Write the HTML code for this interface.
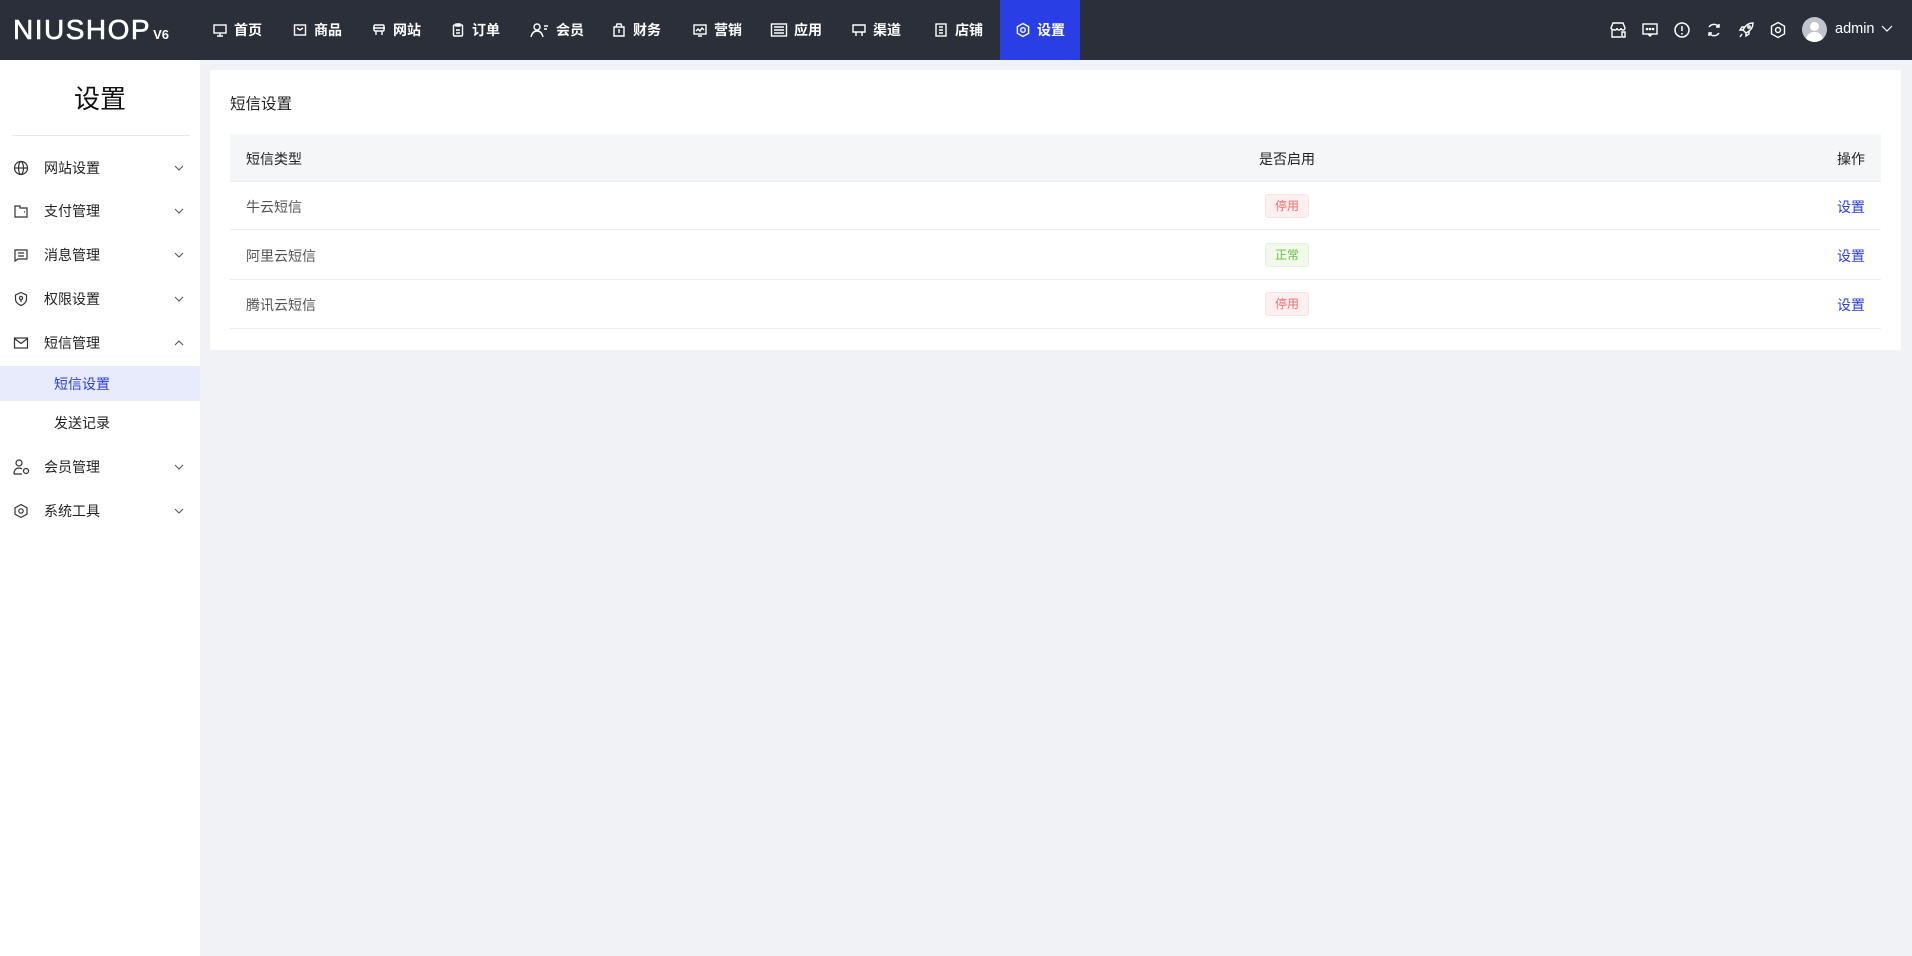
<!DOCTYPE html>
<html><head><meta charset="utf-8"><style>
*{margin:0;padding:0;box-sizing:border-box}
body{width:1912px;height:956px;background:#f0f2f5;font-family:"Liberation Sans","Noto Sans CJK SC",sans-serif;position:relative;overflow:hidden;color:#333}
.top{position:absolute;left:0;top:0;width:1912px;height:60px;background:#2b2f3a;color:#fff}
.logo{position:absolute;left:13px;top:14px;font-size:28px;font-weight:normal;letter-spacing:1.5px;color:#fff;-webkit-text-stroke:0.6px #fff}
.logo small{font-size:13px;margin-left:2px;letter-spacing:0;font-weight:bold;-webkit-text-stroke:0}
.nav{position:absolute;top:0;height:60px;display:flex;align-items:center;font-size:14px;font-weight:bold;color:#fff}
.nav svg{margin-right:6px}
.act{background:#2a3ee6}
.ric{position:absolute;top:21px}
.side{position:absolute;left:0;top:60px;width:200px;height:896px;background:#fff}
.stitle{position:absolute;left:0;width:200px;top:79px;text-align:center;font-size:26px;color:#111}
.div{position:absolute;left:12px;width:178px;top:135px;height:1px;background:#e8e8ec}
.mi{position:absolute;left:0;width:200px;height:36px;font-size:14px;color:#222;display:flex;align-items:center}
.mi svg.ic{position:absolute;left:13px}
.mi span{position:absolute;left:44px}
.mi svg.ar{position:absolute;left:174px}
.sub{position:absolute;left:0;width:200px;height:36px;font-size:14px;display:flex;align-items:center;padding-left:54px;color:#222}
.card{position:absolute;left:210px;top:70px;width:1691px;height:280px;background:#fff}
.ct{position:absolute;left:230px;top:92px;font-size:15.5px;color:#222}
.row{position:absolute;left:230px;width:1651px;border-bottom:1px solid #ebeef5;font-size:14px}
.row .a{position:absolute;left:16px}
.row .b{position:absolute;left:1035px;width:44px;text-align:center}
.row .c{position:absolute;right:16px}
.tag{display:inline-block;width:44px;height:24px;line-height:22px;font-size:12px;border-radius:3px;text-align:center}
.r{background:#fef0f0;border:1px solid #fde2e2;color:#f56c6c}
.g{background:#f0f9eb;border:1px solid #e1f3d8;color:#67c23a}
.lk{color:#2a3ee6}
</style></head><body>
<div class="top">
<div class="logo">NIUSHOP<small>V6</small></div>
<div class="nav" style="left:212px"><svg width="16" height="16" viewBox="0 0 16 16" fill="none" stroke="#fff" stroke-width="1.4"><rect x="2" y="3" width="12" height="8"/><path d="M8 11v3M5 14h6"/></svg>首页</div>
<div class="nav" style="left:292px"><svg width="16" height="16" viewBox="0 0 16 16" fill="none" stroke="#fff" stroke-width="1.4"><rect x="2.5" y="3" width="11" height="10"/><path d="M5 6l3 2 3-2"/></svg>商品</div>
<div class="nav" style="left:371px"><svg width="16" height="16" viewBox="0 0 16 16" fill="none" stroke="#fff" stroke-width="1.4"><rect x="3" y="3" width="10" height="6" rx="1"/><path d="M5 9v4M11 9v4M2 6h12"/></svg>网站</div>
<div class="nav" style="left:450px"><svg width="16" height="16" viewBox="0 0 16 16" fill="none" stroke="#fff" stroke-width="1.4"><rect x="3.5" y="3" width="9" height="11" rx="1"/><path d="M6 2h4v2H6zM6 8h4M6 11h4"/></svg>订单</div>
<div class="nav" style="left:530px"><svg width="20" height="16" viewBox="0 0 20 16" fill="none" stroke="#fff" stroke-width="1.4"><circle cx="7" cy="5" r="3"/><path d="M1 15c1-4 3-6 6-6s5 2 6 6M14 4h4M14 7h3"/></svg>会员</div>
<div class="nav" style="left:611px"><svg width="16" height="16" viewBox="0 0 16 16" fill="none" stroke="#fff" stroke-width="1.4"><path d="M3 5h10v9H3zM5 5l1-3h4l1 3M8 7v4"/></svg>财务</div>
<div class="nav" style="left:692px"><svg width="16" height="16" viewBox="0 0 16 16" fill="none" stroke="#fff" stroke-width="1.4"><rect x="2" y="3" width="12" height="9"/><path d="M4 9l2-2 2 2 2-3 2 2M6 14h4"/></svg>营销</div>
<div class="nav" style="left:770px"><svg width="18" height="16" viewBox="0 0 18 16" fill="none" stroke="#fff" stroke-width="1.4"><rect x="1.5" y="2" width="15" height="12"/><path d="M4 5h10M4 8h10M4 11h10"/></svg>应用</div>
<div class="nav" style="left:851px"><svg width="16" height="16" viewBox="0 0 16 16" fill="none" stroke="#fff" stroke-width="1.4"><path d="M2 3h12v7H2zM5 10v4M11 10v4"/></svg>渠道</div>
<div class="nav" style="left:933px"><svg width="16" height="16" viewBox="0 0 16 16" fill="none" stroke="#fff" stroke-width="1.4"><rect x="3" y="2" width="10" height="12"/><path d="M6 5h4M6 8h4M6 11h4"/></svg>店铺</div>
<div class="nav act" style="left:1000px;width:80px;justify-content:center"><svg width="16" height="16" viewBox="0 0 16 16" fill="none" stroke="#fff" stroke-width="1.4"><circle cx="8" cy="8" r="2.3"/><path d="M8 1.5l5.6 3.2v6.6L8 14.5l-5.6-3.2V4.7z"/></svg>设置</div>
<svg class="ric" style="left:1609px" width="18" height="18" viewBox="0 0 18 18" fill="none" stroke="#fff" stroke-width="1.4"><path d="M2 7l2-5h10l2 5c0 1.5-1.2 2-2 2s-2-.5-2-2c0 1.5-1.2 2-2 2s-2-.5-2-2c0 1.5-1.2 2-2 2S2 8.5 2 7zM3 9v7h9M13 11h3v5h-3z"/></svg>
<svg class="ric" style="left:1641px" width="18" height="18" viewBox="0 0 18 18" fill="none" stroke="#fff" stroke-width="1.4"><rect x="2" y="3" width="14" height="10"/><path d="M7 13l2 2 2-2"/><circle cx="6" cy="8" r=".6" fill="#fff"/><circle cx="9" cy="8" r=".6" fill="#fff"/><circle cx="12" cy="8" r=".6" fill="#fff"/></svg>
<svg class="ric" style="left:1673px" width="18" height="18" viewBox="0 0 18 18" fill="none" stroke="#fff" stroke-width="1.5"><circle cx="9" cy="9" r="7"/><path d="M9 5v5M9 12v1.5"/></svg>
<svg class="ric" style="left:1705px" width="18" height="18" viewBox="0 0 18 18" fill="none" stroke="#fff" stroke-width="1.5"><path d="M14 6a6 6 0 0 0-10 0M4 12a6 6 0 0 0 10 0M14 3v3h-3M4 15v-3h3"/></svg>
<svg class="ric" style="left:1737px" width="18" height="18" viewBox="0 0 18 18" fill="none" stroke="#fff" stroke-width="1.4"><path d="M16 2c-5 0-8 3-10 7l3 3c4-2 7-5 7-10zM6 9H3l2-3h3M9 12v3l3-2v-3M5 13l-2 3"/><circle cx="12" cy="6" r="1.2"/></svg>
<svg class="ric" style="left:1769px" width="18" height="18" viewBox="0 0 18 18" fill="none" stroke="#fff" stroke-width="1.4"><circle cx="9" cy="9" r="2.5"/><path d="M9 1.5l6.5 3.7v7.6L9 16.5l-6.5-3.7V5.2z"/></svg>
<div style="position:absolute;left:1802px;top:17px;width:25px;height:25px;border-radius:50%;background:#c0c4cc;overflow:hidden"><div style="position:absolute;left:8px;top:5px;width:9px;height:9px;border-radius:50%;background:#fff"></div><div style="position:absolute;left:4px;top:15px;width:17px;height:12px;border-radius:8px 8px 0 0;background:#fff"></div></div>
<div style="position:absolute;left:1835px;top:21px;font-size:14.5px;color:#fff">admin</div>
<svg style="position:absolute;left:1881px;top:25px" width="12" height="8" viewBox="0 0 12 8" fill="none" stroke="#fff" stroke-width="1.2"><path d="M1 1l5 5 5-5"/></svg>
</div>

<div class="side"></div>
<div class="stitle">设置</div>
<div class="div"></div>
<div class="mi" style="top:150px"><svg class="ic" width="16" height="16" viewBox="0 0 16 16" fill="none" stroke="#333" stroke-width="1.2"><circle cx="8" cy="8" r="6.5"/><ellipse cx="8" cy="8" rx="2.5" ry="6.5"/><path d="M1.5 8h13"/></svg><span>网站设置</span><svg class="ar" width="10" height="6" viewBox="0 0 10 6" fill="none" stroke="#555" stroke-width="1.1"><path d="M1 1l4 4 4-4"/></svg></div>
<div class="mi" style="top:193px"><svg class="ic" width="16" height="16" viewBox="0 0 16 16" fill="none" stroke="#333" stroke-width="1.2"><path d="M2 3h5v2h7v9H2z"/><path d="M11 9h1"/></svg><span>支付管理</span><svg class="ar" width="10" height="6" viewBox="0 0 10 6" fill="none" stroke="#555" stroke-width="1.1"><path d="M1 1l4 4 4-4"/></svg></div>
<div class="mi" style="top:237px"><svg class="ic" width="16" height="16" viewBox="0 0 16 16" fill="none" stroke="#333" stroke-width="1.2"><path d="M2 3h12v9H5l-3 2zM5 6h6M5 9h6"/></svg><span>消息管理</span><svg class="ar" width="10" height="6" viewBox="0 0 10 6" fill="none" stroke="#555" stroke-width="1.1"><path d="M1 1l4 4 4-4"/></svg></div>
<div class="mi" style="top:281px"><svg class="ic" width="16" height="16" viewBox="0 0 16 16" fill="none" stroke="#333" stroke-width="1.2"><path d="M8 1.5l5.5 2.5v4c0 3-2.5 5.5-5.5 6.5-3-1-5.5-3.5-5.5-6.5V4z"/><circle cx="8" cy="7" r="1.6"/><path d="M8 8.6v2.5"/></svg><span>权限设置</span><svg class="ar" width="10" height="6" viewBox="0 0 10 6" fill="none" stroke="#555" stroke-width="1.1"><path d="M1 1l4 4 4-4"/></svg></div>
<div class="mi" style="top:325px"><svg class="ic" width="16" height="16" viewBox="0 0 16 16" fill="none" stroke="#333" stroke-width="1.2"><rect x="1.5" y="3" width="13" height="10"/><path d="M1.5 3.5l6.5 5 6.5-5"/></svg><span>短信管理</span><svg class="ar" width="10" height="6" viewBox="0 0 10 6" fill="none" stroke="#555" stroke-width="1.1"><path d="M1 5l4-4 4 4"/></svg></div>
<div class="sub" style="top:366px;height:35px;background:#e8ebfc;color:#2a3ee6">短信设置</div>
<div class="sub" style="top:405px">发送记录</div>
<div class="mi" style="top:449px"><svg class="ic" width="18" height="18" viewBox="0 0 18 18" fill="none" stroke="#333" stroke-width="1.2"><circle cx="6" cy="5" r="3"/><path d="M1 16c0-4 2-6 5-6 1 0 2 .3 3 1M1 16h8"/><circle cx="13" cy="13" r="2.5"/></svg><span>会员管理</span><svg class="ar" width="10" height="6" viewBox="0 0 10 6" fill="none" stroke="#555" stroke-width="1.1"><path d="M1 1l4 4 4-4"/></svg></div>
<div class="mi" style="top:493px"><svg class="ic" width="16" height="16" viewBox="0 0 16 16" fill="none" stroke="#333" stroke-width="1.2"><path d="M8 1.5l6 3.3v6.4L8 14.5l-6-3.3V4.8z"/><circle cx="8" cy="8" r="2.2"/></svg><span>系统工具</span><svg class="ar" width="10" height="6" viewBox="0 0 10 6" fill="none" stroke="#555" stroke-width="1.1"><path d="M1 1l4 4 4-4"/></svg></div>

<div class="card"></div>
<div class="ct">短信设置</div>
<div class="row" style="top:134px;height:48px;background:#f5f6f8;color:#222"><span class="a" style="top:15px">短信类型</span><span class="b" style="top:15px;left:1006px;width:102px">是否启用</span><span class="c" style="top:15px">操作</span></div>
<div class="row" style="top:182px;height:48px;color:#555"><span class="a" style="top:15px">牛云短信</span><span class="b" style="top:12px"><span class="tag r">停用</span></span><span class="c lk" style="top:15px">设置</span></div>
<div class="row" style="top:230px;height:50px;color:#555"><span class="a" style="top:16px">阿里云短信</span><span class="b" style="top:13px"><span class="tag g">正常</span></span><span class="c lk" style="top:16px">设置</span></div>
<div class="row" style="top:280px;height:49px;color:#555"><span class="a" style="top:15px">腾讯云短信</span><span class="b" style="top:12px"><span class="tag r">停用</span></span><span class="c lk" style="top:15px">设置</span></div>
</body></html>
